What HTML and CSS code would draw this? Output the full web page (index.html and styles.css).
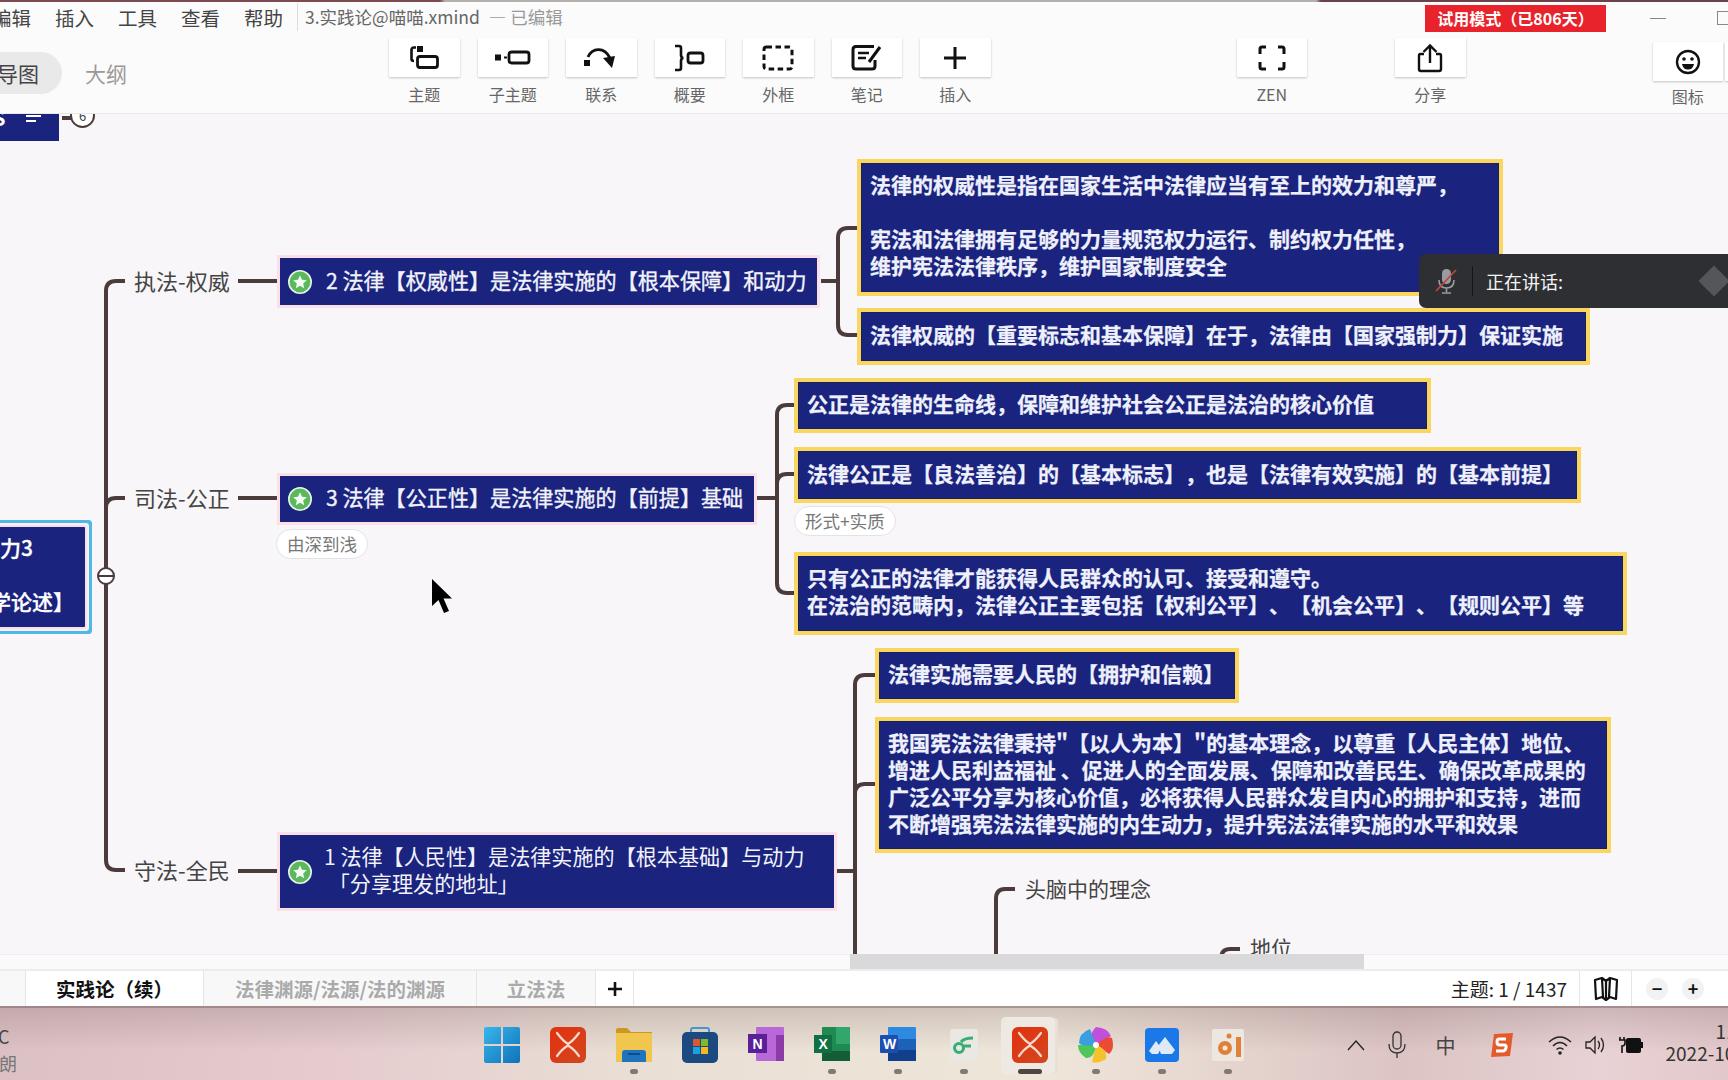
FILE: index.html
```html
<!DOCTYPE html>
<html lang="zh-CN">
<head>
<meta charset="utf-8">
<title>3.实践论@喵喵.xmind</title>
<link rel="stylesheet" href="styles.css">
</head>
<body>
<svg class="defs" width="0" height="0" aria-hidden="true">
  <defs><linearGradient id="xm" x1="0" y1="0" x2="1" y2="1"><stop offset="0" stop-color="#e2300f"/><stop offset="1" stop-color="#d2481f"/></linearGradient></defs>
  <symbol id="xmind" viewBox="0 0 36 36">
    <rect width="36" height="36" rx="6" fill="url(#xm)"/>
    <path d="M7 6 Q13 14 18 17 Q23 14 29 6M7 29 Q12 22 18 18.5 Q24 22 29 29" fill="none" stroke="#f6d8cd" stroke-width="2.2" stroke-linecap="round"/>
  </symbol>
  <symbol id="star" viewBox="0 0 24 24">
    <circle cx="12" cy="12" r="11.2" fill="#5cb85c" stroke="#e8f3e8" stroke-width="1.6"/>
    <path d="M12 5.2l2 4.5 4.8.5-3.6 3.2 1 4.8-4.2-2.5-4.2 2.5 1-4.8-3.6-3.2 4.8-.5z" fill="#f3faf3"/>
  </symbol>
</svg>

<div class="topstrip"></div>

<header class="menubar">
  <nav class="menu"><span>编辑</span><span>插入</span><span>工具</span><span>查看</span><span>帮助</span></nav>
  <div class="doc-title"><span>3.实践论@喵喵.xmind</span><span class="doc-state">— 已编辑</span></div>
  <div class="trial">试用模式（已806天）</div>
  <div class="win-min"></div>
  <div class="win-max"></div>
</header>

<section class="toolbar">
  <div class="view-switch"><span class="view-on">导图</span><span class="view-off">大纲</span></div>
  <div class="tool-group">
    <div class="tool"><div class="tool-btn"><svg width="34" height="26" viewBox="0 0 34 26"><path d="M9 2.500H7Q4.500 2.500 4.500 5V14Q4.500 16 7 16" fill="none" stroke="#111" stroke-width="2.600"/><rect x="10" y="1" width="6" height="6" fill="#111"/><rect x="10.500" y="11.500" width="20" height="11" rx="2.500" fill="none" stroke="#111" stroke-width="2.800"/></svg></div><span>主题</span></div>
    <div class="tool"><div class="tool-btn"><svg width="38" height="20" viewBox="0 0 38 20"><rect x="1" y="6.500" width="6" height="6" fill="#111"/><path d="M10 9.500h3" stroke="#111" stroke-width="2"/><rect x="15" y="4" width="20" height="11" rx="2.500" fill="none" stroke="#111" stroke-width="2.800"/></svg></div><span>子主题</span></div>
    <div class="tool"><div class="tool-btn"><svg width="36" height="26" viewBox="0 0 36 26"><rect x="1" y="15" width="6" height="6" fill="#111"/><path d="M5 12C9 3 21 1 27 13" fill="none" stroke="#111" stroke-width="2.800"/><path d="M20 13l12-2-3 12z" fill="#111"/></svg></div><span>联系</span></div>
    <div class="tool"><div class="tool-btn"><svg width="34" height="28" viewBox="0 0 34 28"><path d="M2 2H6Q8 2 8 4V11Q8 14 10.500 14Q8 14 8 17V24Q8 26 6 26H2" fill="none" stroke="#111" stroke-width="2.600"/><rect x="15" y="9" width="15" height="10" rx="2.500" fill="none" stroke="#111" stroke-width="2.800"/></svg></div><span>概要</span></div>
    <div class="tool"><div class="tool-btn"><svg width="32" height="26" viewBox="0 0 32 26"><rect x="2" y="2" width="28" height="22" rx="2.500" fill="none" stroke="#111" stroke-width="3" stroke-dasharray="5.500 3.500"/></svg></div><span>外框</span></div>
    <div class="tool"><div class="tool-btn"><svg width="32" height="26" viewBox="0 0 32 26"><path d="M23 1.500H5Q2 1.500 2 4.500V21Q2 24 5 24H21Q24 24 24 21V15" fill="none" stroke="#111" stroke-width="3"/><path d="M7 8h11M7 13h8" stroke="#111" stroke-width="2.600"/><path d="M29 2L18 17" stroke="#111" stroke-width="3"/></svg></div><span>笔记</span></div>
    <div class="tool"><div class="tool-btn"><svg width="24" height="24" viewBox="0 0 24 24"><path d="M12 1v22M1 12h22" stroke="#111" stroke-width="3"/></svg></div><span>插入</span></div>
    <div class="tool tool-zen"><div class="tool-btn"><svg width="28" height="26" viewBox="0 0 28 26"><path d="M2 9V4Q2 2 4 2H8M20 2H24Q26 2 26 4V9M26 17V22Q26 24 24 24H20M8 24H4Q2 24 2 22V17" fill="none" stroke="#111" stroke-width="3"/></svg></div><span>ZEN</span></div>
    <div class="tool tool-share"><div class="tool-btn"><svg width="26" height="30" viewBox="0 0 26 30"><path d="M7 11H3.500Q2 11 2 12.500V26Q2 28 4 28H22Q24 28 24 26V12.500Q24 11 22.500 11H19" fill="none" stroke="#111" stroke-width="2.400"/><path d="M13 20V3M6.500 9L13 2.500 19.500 9" fill="none" stroke="#111" stroke-width="2.400"/></svg></div><span>分享</span></div>
    <div class="tool tool-icon"><div class="tool-btn"><svg width="26" height="26" viewBox="0 0 26 26"><circle cx="13" cy="13" r="11" fill="none" stroke="#111" stroke-width="2.400"/><circle cx="9" cy="10" r="1.800" fill="#111"/><circle cx="17" cy="10" r="1.800" fill="#111"/><path d="M7 15h12Q18 20.500 13 20.500T7 15z" fill="#111"/></svg></div><span>图标</span></div>
    <div class="tool tool-next"><div class="tool-btn"></div></div>
  </div>
</section>

<main class="canvas">
  <svg class="links" width="1728" height="841" viewBox="0 0 1728 841">
    <g fill="none" stroke="#4b3b3b" stroke-width="4">
      <path d="M125 167H116Q106 167 106 177V746Q106 756 116 756H125"/>
      <path d="M125 384H116Q106 384 106 394"/>
      <path d="M238 167H277M238 384H277M238 757H277"/>
      <path d="M821 167H838M858 114H848Q838 114 838 124V211Q838 221 848 221H858"/>
      <path d="M757 384H777M795 291H787Q777 291 777 301V469Q777 479 787 479H795M795 360H787Q777 360 777 370"/>
      <path d="M836 757H855M875 561H865Q855 561 855 571V841M875 670H865Q855 670 855 680"/>
      <path d="M1015 775H1005Q996 775 996 785V841"/>
      <path d="M1240 835H1230Q1221 835 1221 845"/>
      <path d="M62 4H72"/>
    </g>
  </svg>
  <div class="stub-node"><span>S</span><i class="stub-lines"></i></div>
  <div class="count-badge">6</div>

  <div class="root"><p class="root-a">力3</p><p class="root-b">学论述】</p></div>
  <div class="collapse"></div>

  <div class="branch b1">执法-权威</div>
  <div class="branch b2">司法-公正</div>
  <div class="branch b3">守法-全民</div>

  <div class="sub s1"><svg class="star"><use href="#star"/></svg><p>2 法律【权威性】是法律实施的【根本保障】和动力</p></div>
  <div class="sub s2"><svg class="star"><use href="#star"/></svg><p>3 法律【公正性】是法律实施的【前提】基础</p></div>
  <div class="sub s3"><svg class="star"><use href="#star"/></svg><p class="sub-two">1 法律【人民性】是法律实施的【根本基础】与动力<br>&nbsp;「分享理发的地址」</p></div>

  <div class="note n1">由深到浅</div>
  <div class="note n2">形式+实质</div>

  <div class="box k1">法律的权威性是指在国家生活中法律应当有至上的效力和尊严，<br><br>宪法和法律拥有足够的力量规范权力运行、制约权力任性，<br>维护宪法法律秩序，维护国家制度安全</div>
  <div class="box k2">法律权威的【重要标志和基本保障】在于，法律由【国家强制力】保证实施</div>
  <div class="box k3">公正是法律的生命线，保障和维护社会公正是法治的核心价值</div>
  <div class="box k4">法律公正是【良法善治】的【基本标志】，也是【法律有效实施】的【基本前提】</div>
  <div class="box k5">只有公正的法律才能获得人民群众的认可、接受和遵守。<br>在法治的范畴内，法律公正主要包括【权利公平】、【机会公平】、【规则公平】等</div>
  <div class="box k6">法律实施需要人民的【拥护和信赖】</div>
  <div class="box k7">我国宪法法律秉持"【以人为本】"的基本理念，以尊重【人民主体】地位、<br>增进人民利益福祉 、促进人的全面发展、保障和改善民生、确保改革成果的<br>广泛公平分享为核心价值，必将获得人民群众发自内心的拥护和支持，进而<br>不断增强宪法法律实施的内生动力，提升宪法法律实施的水平和效果</div>

  <div class="plain p1">头脑中的理念</div>
  <div class="plain p2">地位</div>

  <svg class="cursor" width="24" height="36" viewBox="0 0 24 36"><path d="M1 0V27L7.500 21 13 34 18 32 12.500 19.500H21z" fill="#000"/></svg>

  <aside class="speaking">
    <svg width="24" height="28" viewBox="0 0 24 28"><rect x="8" y="2" width="9" height="15" rx="4.500" fill="#9a9ca0"/><path d="M5 13Q5 21 12.500 21T20 13M12.500 21V25M8 26H17" fill="none" stroke="#9a9ca0" stroke-width="1.600"/><path d="M2 24L22 3" stroke="#b8483f" stroke-width="1.800"/></svg>
    <i class="speak-sep"></i>
    <span>正在讲话:</span>
    <i class="speak-logo"></i>
  </aside>
</main>

<div class="hscroll"><div class="hthumb"></div></div>

<footer class="tabs">
  <div class="tab tab-blank"></div>
  <div class="tab tab-on">实践论（续）</div>
  <div class="tab tab-wide">法律渊源/法源/法的渊源</div>
  <div class="tab tab-mid">立法法</div>
  <div class="tab tab-add"><svg width="16" height="16" viewBox="0 0 16 16"><path d="M8 1v14M1 8h14" stroke="#111" stroke-width="2.600"/></svg></div>
  <div class="tab-fill">主题: 1 / 1437</div>
  <div class="tab-map"><svg width="26" height="24" viewBox="0 0 26 24"><path d="M2 3L9 1 13 4 17 1 24 3 23 22 17 20 13 23 9 20 3 22zM9 1L10 20M17 1L16 20M13 4V23" fill="none" stroke="#111" stroke-width="2.200" stroke-linejoin="round"/></svg></div>
  <div class="zoom-ctl"><span class="zoom-btn">−</span><span class="zoom-btn">+</span></div>
</footer>

<div class="taskbar">
  <div class="weather"><span>C</span><span class="weather-sub">朗</span></div>
  <div class="apps">
    <div class="app"><svg width="36" height="36" viewBox="0 0 36 36"><defs><linearGradient id="w" x1="0" y1="0" x2="1" y2="1"><stop offset="0" stop-color="#38b6ec"/><stop offset="1" stop-color="#0f72b8"/></linearGradient></defs><path d="M2 0H17V17H0V2Q0 0 2 0zM19 0H34Q36 0 36 2V17H19zM0 19H17V36H2Q0 36 0 34zM19 19H36V34Q36 36 34 36H19z" fill="url(#w)"/></svg></div>
    <div class="app"><svg width="36" height="36"><use href="#xmind"/></svg></div>
    <div class="app app-run"><svg width="36" height="36" viewBox="0 0 36 36"><path d="M0 3Q0 1 2 1H11L15 5H36V34H0z" fill="#c99a1f"/><path d="M0 6H36V35H0z" fill="#f0c64e"/><path d="M6 35V26Q6 23 9 23H27Q30 23 30 26V35z" fill="#1f74bd"/><path d="M12 27H24" stroke="#0e4d85" stroke-width="2"/></svg></div>
    <div class="app"><svg width="36" height="36" viewBox="0 0 36 36"><path d="M9 6V3Q9 1 11 1H25Q27 1 27 3V6" fill="none" stroke="#3f9ad1" stroke-width="2"/><rect y="5" width="36" height="31" rx="5" fill="#1c4a80"/><rect x="11" y="12" width="7" height="7" fill="#e0562e"/><rect x="19" y="12" width="7" height="7" fill="#7fba2a"/><rect x="11" y="20" width="7" height="7" fill="#1ba3e0"/><rect x="19" y="20" width="7" height="7" fill="#f5b91e"/></svg></div>
    <div class="app"><svg width="36" height="36" viewBox="0 0 36 36"><rect x="8" width="28" height="34" rx="1" fill="#b868d8"/><path d="M28 8H36V34H28z" fill="#8d3ba8"/><rect y="7" width="19" height="19" fill="#5b1f98"/><text x="4.500" y="22" class="app-letter">N</text></svg></div>
    <div class="app app-run"><svg width="36" height="36" viewBox="0 0 36 36"><rect x="8" width="28" height="34" rx="1" fill="#1f8a52"/><path d="M22 0H36V17H22z" fill="#33a66c"/><path d="M8 24H36V34H8z" fill="#135e37"/><rect y="8" width="18" height="18" fill="#107044"/><text x="4.500" y="22" class="app-letter">X</text></svg></div>
    <div class="app app-run"><svg width="36" height="36" viewBox="0 0 36 36"><rect x="8" width="28" height="34" rx="1" fill="#2d8ae0"/><path d="M8 12H36V23H8z" fill="#1c62b8"/><path d="M8 23H36V34H8z" fill="#123f8c"/><rect y="8" width="18" height="18" rx="1" fill="#1d4fb0"/><text x="3" y="22" class="app-letter">W</text></svg></div>
    <div class="app app-run"><svg width="28" height="32" viewBox="0 0 28 32"><rect width="28" height="32" rx="3" fill="#e9e8e3"/><circle cx="9" cy="19" r="4.500" fill="none" stroke="#39ad74" stroke-width="3"/><path d="M11 13Q14 9 23 9M14 17H21" fill="none" stroke="#39ad74" stroke-width="3"/></svg></div>
    <div class="app app-active"><div class="app-glow"></div><svg width="36" height="36"><use href="#xmind"/></svg></div>
    <div class="app app-run"><svg width="36" height="36" viewBox="0 0 36 36"><path d="M18 18Q8 10 18 0Q30 1 33 9z" fill="#c04fdc"/><path d="M18 18Q28 8 34 11Q37 22 31 27z" fill="#eb4a35"/><path d="M18 18Q30 22 28 32Q20 37 14 35z" fill="#f6c22c"/><path d="M18 18Q16 32 8 31Q0 26 0 18z" fill="#4fc65a"/><path d="M18 18Q4 20 1 16Q1 6 12 2z" fill="#3a9ee0"/><circle cx="18" cy="18" r="3" fill="#fff"/></svg></div>
    <div class="app app-run"><svg width="34" height="34" viewBox="0 0 34 34"><rect width="34" height="34" rx="4" fill="#1b78e8"/><path d="M4 23L11 13 16 20 13 26H7zM13 18L20 9 30 22 27 26H16z" fill="#dfeaf6"/></svg></div>
    <div class="app app-run"><svg width="32" height="32" viewBox="0 0 32 32"><rect width="32" height="32" rx="2" fill="#ece7e0"/><circle cx="13" cy="19" r="7" fill="#e0813a"/><circle cx="13" cy="19" r="2.500" fill="#f6e8d6"/><circle cx="17" cy="7" r="2.500" fill="#e0813a"/><rect x="24" y="8" width="5" height="20" fill="#e0813a"/></svg></div>
  </div>
  <div class="tray">
    <svg class="tray-caret" width="18" height="12" viewBox="0 0 18 12"><path d="M1 11L9 2l8 9" fill="none" stroke="#222" stroke-width="1.300"/></svg>
    <svg class="tray-mic" width="20" height="28" viewBox="0 0 20 28"><rect x="6" y="1" width="8" height="17" rx="4" fill="none" stroke="#333" stroke-width="1.300"/><path d="M2 13Q2 22 10 22T18 13M10 22V27" fill="none" stroke="#333" stroke-width="1.300"/></svg>
    <span class="tray-ime">中</span>
    <svg class="tray-s" width="26" height="26" viewBox="0 0 26 26"><path d="M5 2L24 1 21 24 2 25z" fill="#e45b2b"/><path d="M17 7H10Q8 7 8 10T11 13H15Q18 13 17 16T14 19H7" fill="none" stroke="#fff" stroke-width="3"/></svg>
    <svg class="tray-wifi" width="24" height="22" viewBox="0 0 24 22"><path d="M1 8Q12-2 23 8M5 12Q12 5 19 12M8.500 15.500Q12 12.500 15.500 15.500" fill="none" stroke="#222" stroke-width="1.500"/><circle cx="12" cy="19" r="1.800" fill="#222"/></svg>
    <svg class="tray-vol" width="24" height="22" viewBox="0 0 24 22"><path d="M2 8V14H6L11 19V3L6 8z" fill="none" stroke="#222" stroke-width="1.300"/><path d="M14 7Q17 11 14 15M17 4Q22 11 17 18" fill="none" stroke="#222" stroke-width="1.300"/></svg>
    <svg class="tray-pow" width="24" height="24" viewBox="0 0 24 24"><path d="M1 4v3M5 4v3M0 7h6v3Q6 13 3 13V20" fill="none" stroke="#111" stroke-width="1.600"/><rect x="7" y="5" width="15" height="15" rx="2" fill="#111"/><rect x="19" y="9" width="5" height="6" fill="#111"/></svg>
    <div class="clock"><span class="clock-time">11</span><span>2022-10</span></div>
  </div>
</div>
</body>
</html>
```

FILE: styles.css
```css
* { box-sizing: border-box; }
html, body { margin: 0; padding: 0; }
body {
  width: 1728px;
  height: 1080px;
  overflow: hidden;
  display: flex;
  flex-direction: column;
  background: #fbfbfb;
  color: #333;
  font-family: "Noto Sans CJK SC", "Noto Sans", sans-serif;
  text-spacing-trim: space-all;
}
p { margin: 0; }
.defs { position: absolute; }

.topstrip {
  height: 2px;
  flex: none;
  background: linear-gradient(90deg, #7d4a52 0 440px, #b5b0ac 445px 1316px, #6d4149 1321px);
}

.menubar {
  height: 34px;
  flex: none;
  display: flex;
  align-items: center;
  padding-bottom: 4px;
  overflow: hidden;
  font-size: 19px;
  color: #444;
  position: relative;
}
.menu { display: flex; gap: 24px; margin-left: -8px; font-size: 19.500px; }
.menu span { width: 39px; white-space: nowrap; }
.doc-title {
  margin-left: 14px;
  padding-left: 7px;
  border-left: 1px solid #ddd;
  display: flex;
  gap: 9px;
  font-size: 17.500px;
  line-height: 28px;
  color: #666;
}
.doc-state { color: #999; }
.trial {
  position: absolute;
  left: 1425px;
  top: 3px;
  width: 181px;
  height: 27px;
  background: #e8232b;
  color: #fff;
  font-size: 16px;
  font-weight: 700;
  text-align: center;
  line-height: 27px;
  white-space: nowrap;
}
.win-min { position: absolute; left: 1650px; top: 16px; width: 16px; height: 1px; background: #888; }
.win-max { position: absolute; left: 1717px; top: 9px; width: 14px; height: 14px; border: 1px solid #888; }

.toolbar {
  height: 78px;
  flex: none;
  display: flex;
  border-bottom: 1px solid #e8e6e8;
  position: relative;
  overflow: hidden;
}
.view-switch { width: 389px; flex: none; display: flex; align-items: flex-start; padding-top: 16px; margin-left: -30px; }
.view-on {
  width: 92px;
  height: 42px;
  padding-left: 27px;
  border-radius: 21px;
  background: #e9e9ea;
  font-size: 21px;
  line-height: 42px;
  color: #444;
}
.view-off { margin-left: 23px; font-size: 21px; line-height: 42px; color: #999; }
.tool-group { display: flex; padding-top: 2px; margin-left: 30px; }
.tool {
  width: 70.500px;
  margin-right: 18px;
  flex: none;
  display: flex;
  flex-direction: column;
  align-items: center;
  font-size: 16px;
  color: #666;
}
.tool span { margin-top: 6px; line-height: 22px; white-space: nowrap; }
.tool-btn {
  width: 70.500px;
  height: 39px;
  display: flex;
  align-items: center;
  justify-content: center;
  background: #fff;
  box-shadow: 0 1px 2px rgba(0, 0, 0, .22);
}
.tool-zen { margin-left: 228px; }
.tool-share { margin-left: 70px; }
.tool-icon { margin-left: 169px; margin-top: 4px; margin-right: 2px; }
.tool-icon span { margin-top: 4px; }
.tool-next { margin-top: 4px; }

.canvas {
  flex: 1;
  position: relative;
  overflow: hidden;
  background: #f8f6f9;
}
.links { position: absolute; left: 0; top: 0; }

.stub-node {
  position: absolute;
  left: 0;
  top: 0;
  width: 59px;
  height: 27px;
  background: #1a237e;
  color: #fff;
  font-size: 20px;
  font-weight: 700;
  line-height: 8px;
  overflow: hidden;
}
.stub-node span { margin-left: -7px; }
.stub-lines {
  position: absolute;
  left: 26px;
  top: 1px;
  width: 15px;
  height: 2px;
  background: #fff;
}
.stub-lines::after {
  content: "";
  position: absolute;
  left: 0;
  top: 5px;
  width: 10px;
  height: 2px;
  background: #fff;
}
.count-badge {
  position: absolute;
  left: 70px;
  top: -11px;
  width: 25px;
  height: 25px;
  border: 2px solid #4b3b3b;
  border-radius: 50%;
  background: #fff;
  font-size: 13px;
  line-height: 21px;
  text-align: center;
  color: #444;
}

.root {
  position: absolute;
  left: -20px;
  top: 413px;
  width: 105px;
  height: 100px;
  background: #1a237e;
  color: #fff;
  font-size: 21px;
  font-weight: 500;
  line-height: 27px;
  -webkit-text-stroke: .3px #fff;
  box-shadow: 0 0 0 2px #f9dde8, 0 0 0 4px #f6f1f6, 0 0 0 7px #4fb8e4;
  border-radius: 1px;
}
.root-a { position: absolute; left: 20px; top: 7px; white-space: nowrap; }
.root-b { position: absolute; left: 10px; top: 61px; white-space: nowrap; }
.collapse {
  position: absolute;
  left: 97px;
  top: 453px;
  width: 18px;
  height: 18px;
  border: 2px solid #4b3b3b;
  border-radius: 50%;
  background: linear-gradient(#fff 0 6px, #4b3b3b 6px 8px, #fff 8px);
}
.branch, .plain {
  position: absolute;
  font-size: 22px;
  line-height: 28px;
  color: #444;
  white-space: nowrap;
}
.plain { font-size: 21px; }
.b1 { left: 134px; top: 152px; }
.b2 { left: 134px; top: 369px; }
.b3 { left: 134px; top: 741px; }
.p1 { left: 1025px; top: 760px; }
.p2 { left: 1250px; top: 819px; }

.sub {
  position: absolute;
  display: flex;
  align-items: center;
  padding-left: 8px;
  background: #1a237e;
  color: #f2f3fa;
  font-size: 21.100px;
  box-shadow: 0 0 0 3px #fbdfe9;
  white-space: nowrap;
}
.sub p { margin-left: 14px; padding-bottom: 4px; -webkit-text-stroke: .35px #f2f3fa; }
.sub .sub-two { margin-left: 12px; line-height: 27px; -webkit-text-stroke: 0; }
.star { width: 24px; height: 24px; flex: none; }
.s1 { left: 280px; top: 144px; width: 537px; height: 47px; }
.s2 { left: 280px; top: 362px; width: 474px; height: 46px; }
.s3 { left: 280px; top: 721px; width: 554px; height: 73px; }

.note {
  position: absolute;
  height: 30px;
  padding: 0 10px;
  border: 1px solid #e4e2e6;
  border-radius: 15px;
  background: #fff;
  font-size: 17.500px;
  line-height: 28px;
  color: #777;
  white-space: nowrap;
}
.n1 { left: 276px; top: 415px; }
.n2 { left: 794px; top: 392px; }

.box {
  position: absolute;
  padding-left: 9px;
  background: #1a237e;
  border: 4.500px solid #f9d65f;
  outline: 1px solid #1a1f5e;
  outline-offset: -5.500px;
  color: #eef0fb;
  font-size: 21px;
  font-weight: 700;
  line-height: 27px;
  -webkit-text-stroke: .25px #eef0fb;
  white-space: nowrap;
}
.k1 { left: 857px; top: 45px; width: 646px; height: 137px; padding-top: 8px; }
.k2 { left: 857px; top: 194px; width: 733px; height: 57px; padding-top: 9px; }
.k3 { left: 794px; top: 264px; width: 637px; height: 55px; padding-top: 8px; }
.k4 { left: 794px; top: 333px; width: 787px; height: 56px; padding-top: 9px; }
.k5 { left: 794px; top: 438px; width: 833px; height: 83px; padding-top: 8px; }
.k6 { left: 875px; top: 534px; width: 364px; height: 55px; padding-top: 8px; }
.k7 { left: 875px; top: 603px; width: 736px; height: 136px; padding-top: 8px; }

.cursor { position: absolute; left: 431px; top: 465px; }

.speaking {
  position: absolute;
  left: 1419px;
  top: 140px;
  width: 320px;
  height: 54px;
  display: flex;
  align-items: center;
  padding-left: 15px;
  border-radius: 7px 0 0 7px;
  background: #2e2f33;
  color: #f4f4f4;
  font-size: 18px;
}
.speak-sep { width: 1px; height: 30px; margin: 0 13px 0 14px; background: #15161a; }
.speak-logo {
  position: absolute;
  left: 284px;
  top: 16px;
  width: 22px;
  height: 22px;
  background: #55565a;
  transform: rotate(45deg);
}

.hscroll { height: 15px; flex: none; background: #fbfafb; border-top: 1px solid #efedf0; position: relative; }
.hthumb { position: absolute; left: 850px; top: -1px; width: 514px; height: 15px; background: #d9d8da; }

.tabs {
  height: 37px;
  flex: none;
  display: flex;
  align-items: stretch;
  background: #fff;
  border-top: 2px solid #ececed;
  font-size: 19.500px;
  font-weight: 700;
}
.tab {
  display: flex;
  align-items: center;
  justify-content: center;
  border-right: 1px solid #e6e6e6;
  background: #f8f8f8;
  color: #aaa;
  white-space: nowrap;
}
.tab-blank { width: 26px; }
.tab-on { width: 178px; background: #fff; color: #111; }
.tab-wide { width: 273px; }
.tab-mid { width: 119px; }
.tab-add { width: 38px; background: #fff; }
.tab-fill {
  flex: 1;
  text-align: right;
  padding-right: 12px;
  font-size: 19px;
  font-weight: 400;
  line-height: 35px;
  color: #222;
}
.tab-map {
  width: 53px;
  display: flex;
  align-items: center;
  justify-content: center;
  border-left: 1px solid #e6e6e6;
  border-right: 1px solid #e6e6e6;
}
.zoom-ctl { width: 96px; display: flex; align-items: center; gap: 14px; padding-left: 14px; }
.zoom-btn {
  width: 22px;
  height: 22px;
  border-radius: 50%;
  background: #f2f2f2;
  color: #111;
  font-size: 18px;
  font-weight: 700;
  line-height: 21px;
  text-align: center;
}

.taskbar {
  height: 74px;
  flex: none;
  position: relative;
  display: flex;
  border-top: 2px solid rgba(110, 85, 85, .55);
  background:
    linear-gradient(rgba(110, 85, 85, .22), rgba(110, 85, 85, 0) 60%),
    linear-gradient(90deg, #dcc1c4 0, #e6cccf 350px, #e9dfd4 640px, #efe6da 1050px, #dcc4c3 1400px, #e9d2d5 1600px, #e2c8ca 1728px);
}
.weather {
  width: 470.500px;
  flex: none;
  display: flex;
  flex-direction: column;
  padding-top: 15px;
  margin-left: -2px;
  font-size: 18px;
  line-height: 27px;
  color: #444;
}
.weather-sub { color: #777; margin-left: 1px; }
.apps { display: flex; width: 794px; flex: none; }
.app {
  width: 66px;
  height: 72px;
  flex: none;
  position: relative;
  display: flex;
  align-items: center;
  justify-content: center;
  padding-top: 2px;
}
.app svg { position: relative; }
.app-letter { fill: #fff; font-size: 14px; font-weight: 700; font-family: "Liberation Sans", sans-serif; }
.app-run::after, .app-active::after {
  content: "";
  position: absolute;
  left: 29px;
  bottom: 6px;
  width: 8px;
  height: 5px;
  border-radius: 3px;
  background: #7f7a75;
}
.app-active::after { left: 21px; width: 24px; background: #4a4642; }
.app-glow {
  position: absolute;
  left: 4px;
  top: 9px;
  width: 54px;
  height: 57px;
  border-radius: 5px;
  background: #efe9e3;
  box-shadow: 4px 0 0 -1px #e9dfd6;
}
.tray { flex: 1; position: relative; display: flex; align-items: center; height: 72px; padding-top: 2px; }
.tray > svg { flex: none; }
.tray-caret { margin-left: 84px; }
.tray-mic { margin-left: 22px; }
.tray-ime { margin-left: 29px; font-size: 20px; color: #444; }
.tray-s { margin-left: 33px; }
.tray-wifi { margin-left: 33px; }
.tray-vol { margin-left: 12px; }
.tray-pow { margin-left: 11px; }
.clock {
  position: absolute;
  left: 403px;
  top: 12px;
  display: flex;
  flex-direction: column;
  align-items: flex-start;
  width: 82px;
  font-size: 19px;
  line-height: 22px;
  color: #333;
  white-space: nowrap;
}
.clock-time { margin-left: 50px; }
```
